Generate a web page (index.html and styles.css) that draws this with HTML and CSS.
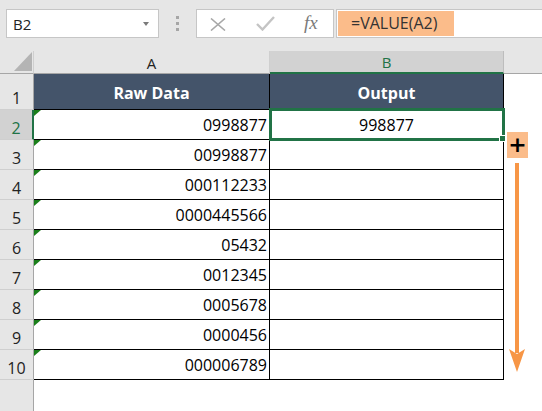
FILE: index.html
```html
<!DOCTYPE html>
<html>
<head>
<meta charset="utf-8">
<link rel="stylesheet" href="styles.css">
</head>
<body>
<div class="app">
  <div class="toolbar">
    <div class="namebox"><span class="name">B2</span><span class="caret"></span></div>
    <div class="grip"><i></i><i></i><i></i></div>
    <div class="fnbox">
      <svg class="ico-x" width="16" height="13" viewBox="0 0 16 13"><path d="M1 0.5 L15 12.5 M15 0.5 L1 12.5" stroke="#a8a8a8" stroke-width="1.6" fill="none"/></svg>
      <svg class="ico-check" width="19" height="15" viewBox="0 0 19 15"><path d="M1 8 L6.5 13.5 L18 1" stroke="#c4c4c4" stroke-width="2.4" fill="none"/></svg>
      <span class="fx">fx</span>
    </div>
    <div class="formula"><span class="ftext">=VALUE(A2)</span></div>
  </div>
  <div class="grid">
    <div class="corner"><span class="corner-tri"></span></div>
    <div class="colhdr">A</div>
    <div class="colhdr sel">B</div>
    <div class="colhdr rest"></div>

    <div class="rowhdr">1</div>
    <div class="th">Raw Data</div>
    <div class="th">Output</div>
    <div class="blank"></div>

    <div class="rowhdr sel">2</div>
    <div class="td num">0998877</div>
    <div class="td out">998877</div>
    <div class="blank"></div>

    <div class="rowhdr">3</div>
    <div class="td num">00998877</div>
    <div class="td out"></div>
    <div class="blank"></div>

    <div class="rowhdr">4</div>
    <div class="td num">000112233</div>
    <div class="td out"></div>
    <div class="blank"></div>

    <div class="rowhdr">5</div>
    <div class="td num">0000445566</div>
    <div class="td out"></div>
    <div class="blank"></div>

    <div class="rowhdr">6</div>
    <div class="td num">05432</div>
    <div class="td out"></div>
    <div class="blank"></div>

    <div class="rowhdr">7</div>
    <div class="td num">0012345</div>
    <div class="td out"></div>
    <div class="blank"></div>

    <div class="rowhdr">8</div>
    <div class="td num">0005678</div>
    <div class="td out"></div>
    <div class="blank"></div>

    <div class="rowhdr">9</div>
    <div class="td num">0000456</div>
    <div class="td out"></div>
    <div class="blank"></div>

    <div class="rowhdr">10</div>
    <div class="td num">000006789</div>
    <div class="td out"></div>
    <div class="blank"></div>

    <div class="rowhdr filler"></div>
    <div class="blank"></div>
    <div class="blank"></div>
    <div class="blank"></div>

    <div class="selection"><span class="handle"></span></div>
    <div class="plus">+</div>
    <svg class="arrow" width="18" height="210" viewBox="0 0 18 210"><rect x="6" y="0" width="4" height="190" fill="#f79646"/><path d="M0 186 L8 191 L16 186 L8 209 Z" fill="#f79646"/></svg>
  </div>
</div>
</body>
</html>
```
FILE: styles.css
```css
* { box-sizing: border-box; }
html, body { margin: 0; padding: 0; }
body {
  width: 542px;
  height: 411px;
  overflow: hidden;
  background: #ffffff;
  font-family: "Open Sans", "Noto Sans", sans-serif;
  color: #000;
}
.app { width: 542px; height: 411px; display: flex; flex-direction: column; }

.toolbar {
  height: 51px;
  background: #e6e6e6;
  display: flex;
  align-items: flex-start;
  padding: 9px 0 0 6px;
}
.namebox {
  width: 153px;
  height: 29px;
  background: #fff;
  border: 1px solid #c6c6c6;
  display: flex;
  align-items: center;
  justify-content: space-between;
  padding: 0 9px 0 6px;
}
.name { font-size: 15px; color: #222; line-height: 20px; }
.caret {
  width: 0; height: 0;
  border-left: 3.5px solid transparent;
  border-right: 3.5px solid transparent;
  border-top: 4px solid #7a7a7a;
  margin-top: 1px;
}
.grip {
  width: 37px;
  height: 29px;
  display: flex;
  flex-direction: column;
  align-items: center;
  justify-content: center;
  gap: 3px;
}
.grip i { display: block; width: 3px; height: 3px; background: #a6a6a6; }
.fnbox {
  width: 138px;
  height: 29px;
  background: #fff;
  border: 1px solid #c6c6c6;
  display: flex;
  align-items: center;
  padding-left: 13px;
}
.ico-x { margin-top: 1px; }
.ico-check { margin-left: 30px; margin-top: 0px; }
.fx {
  margin-left: 29px;
  font-family: "Liberation Serif", "DejaVu Serif", serif;
  font-style: italic;
  font-size: 19px;
  color: #7a7a7a;
  line-height: 20px;
  margin-top: -2px;
}
.formula {
  flex: 1;
  margin-left: 2px;
  margin-right: -2px;
  height: 29px;
  background: #fff;
  border: 1px solid #c6c6c6;
  padding: 0 0 0 1px;
  display: flex;
  align-items: center;
}
.ftext {
  background: #fbbc8a;
  height: 25px;
  width: 116px;
  padding-left: 13px;
  font-size: 16px;
  line-height: 25px;
  color: #333;
  margin-top: 0px;
}

.grid {
  position: relative;
  flex: 1;
  display: grid;
  grid-template-columns: 34px 236px 234px 1fr;
  grid-template-rows: 23px 36px repeat(9, 30px) 1fr;
}
.corner {
  background: #e6e6e6;
  border-right: 1px solid #cfcfcf;
  border-bottom: 1px solid #a6a6a6;
  position: relative;
}
.corner-tri {
  position: absolute;
  right: 1px;
  bottom: 2px;
  width: 0; height: 0;
  border-left: 18px solid transparent;
  border-bottom: 19px solid #b4b4b4;
}
.colhdr {
  background: #e6e6e6;
  border-right: 1px solid #cfcfcf;
  border-bottom: 1px solid #a6a6a6;
  font-size: 15px;
  line-height: 20px;
  color: #222;
  display: flex;
  align-items: flex-end;
  justify-content: center;
  padding-bottom: 0;
}
.colhdr.sel {
  background: #d2d2d2;
  color: #217346;
  border-bottom: 2px solid #217346;
  border-right: 1px solid #bdbdbd;
  padding-bottom: 0;
}
.colhdr.rest { border-right: none; }

.rowhdr {
  background: #e6e6e6;
  border-right: 1px solid #a6a6a6;
  border-bottom: 1px solid #cfcfcf;
  font-size: 16px;
  line-height: 22px;
  color: #222;
  display: flex;
  align-items: flex-end;
  justify-content: center;
  padding-bottom: 0;
}
.rowhdr.sel {
  background: #d2d2d2;
  color: #217346;
  border-right: 2px solid #217346;
}
.rowhdr.filler { border-bottom: none; }

.th {
  background: #44546a;
  color: #fff;
  font-weight: 700;
  font-size: 16px;
  line-height: 22px;
  border-right: 1px solid #000;
  border-bottom: 1px solid #000;
  display: flex;
  align-items: flex-end;
  justify-content: center;
  padding-bottom: 5px;
}
.td {
  border-right: 1px solid #000;
  border-bottom: 1px solid #000;
  font-size: 16px;
  line-height: 22px;
  display: flex;
  align-items: flex-end;
  padding-bottom: 3px;
  position: relative;
  background: #fff;
}
.td.num { justify-content: flex-end; padding-right: 2px; }
.td.num::before {
  content: "";
  position: absolute;
  left: 0;
  top: 0;
  width: 0; height: 0;
  border-top: 6px solid #1a7f1a;
  border-right: 7px solid transparent;
}
.td.out { justify-content: center; }
.blank { background: #fff; }

.selection {
  position: absolute;
  left: 269px;
  top: 57px;
  width: 236px;
  height: 33px;
  border: 3px solid #217346;
}
.handle {
  position: absolute;
  right: -4px;
  bottom: -4px;
  width: 7px;
  height: 7px;
  background: #217346;
  border: 1px solid #fff;
}
.plus {
  position: absolute;
  left: 507px;
  top: 81px;
  width: 21px;
  height: 26px;
  background: #fbbc8a;
  color: #000;
  font-family: "DejaVu Sans", sans-serif;
  font-size: 22px;
  font-weight: 700;
  line-height: 26px;
  text-align: center;
}
.arrow {
  position: absolute;
  left: 509px;
  top: 112px;
}
```
